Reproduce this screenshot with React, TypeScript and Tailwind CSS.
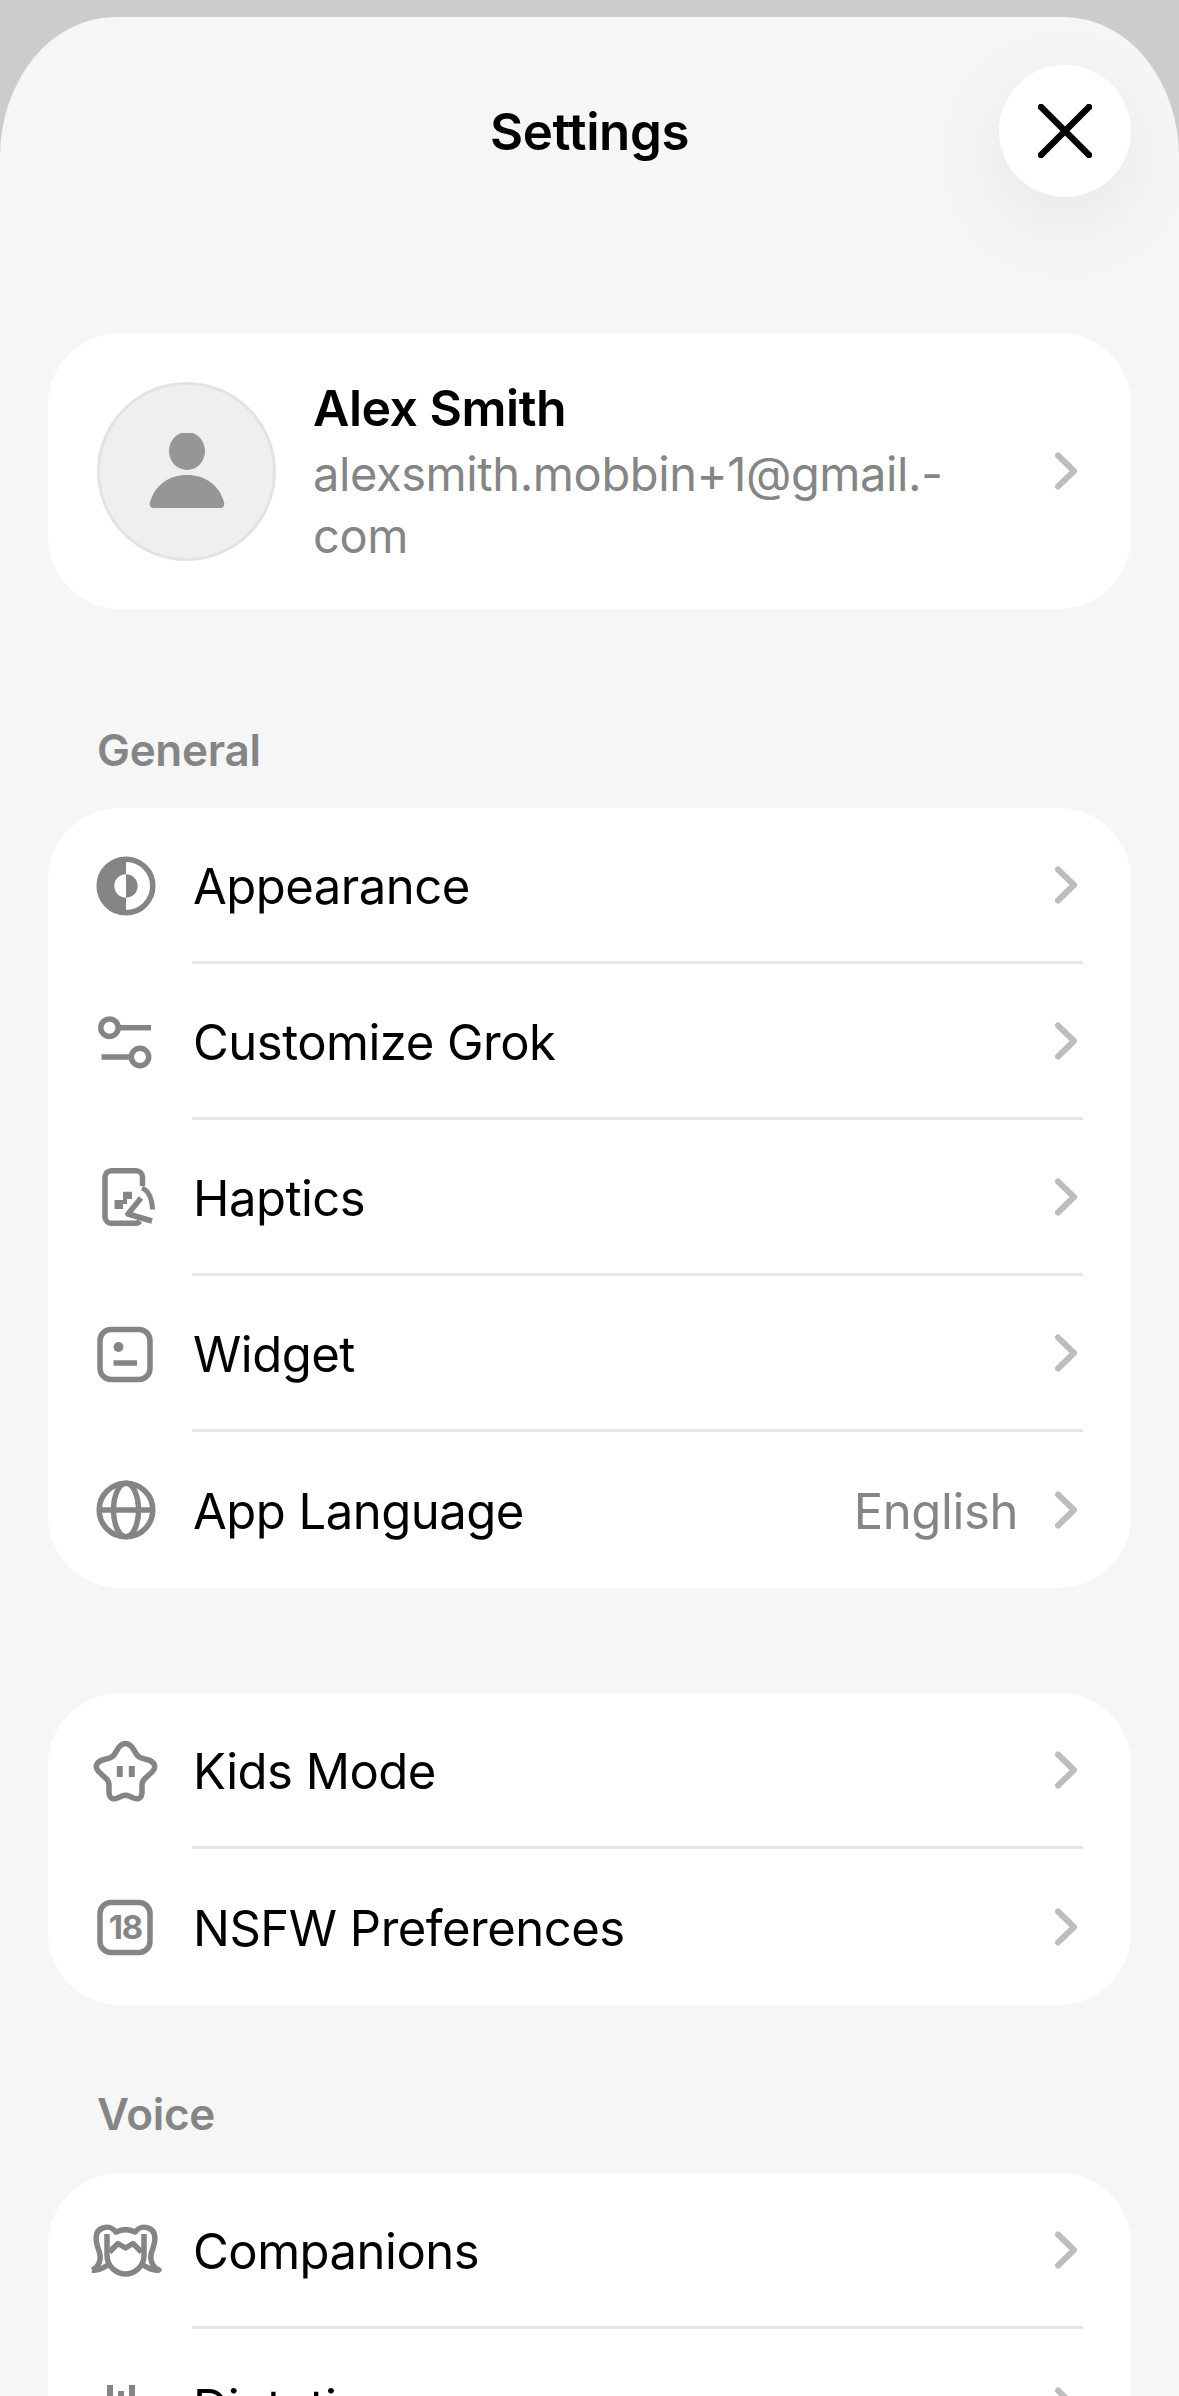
import React from "react";

const G = "#858585";

function Icon({ children }: { children: React.ReactNode }) {
  return (
    <svg viewBox="0 0 60 60" width={60} height={60} fill="none" stroke={G} strokeWidth={5.5} strokeLinecap="butt" strokeLinejoin="round" className="overflow-visible shrink-0">
      {children}
    </svg>
  );
}

const Appearance = () => (
  <Icon>
    <circle cx="30" cy="30" r="26.8" />
    <path d="M30 1 A29 29 0 0 0 30 59 Z" fill={G} stroke="none" />
    <circle cx="30" cy="30" r="11.7" fill="#fff" stroke="none" />
    <path d="M30 18.3 A11.7 11.7 0 0 1 30 41.7 Z" fill={G} stroke="none" />
  </Icon>
);
const Customize = () => (
  <Icon>
    <circle cx="13.5" cy="15.7" r="8.7" />
    <path d="M24 15.7H55" />
    <circle cx="44" cy="45" r="8.7" />
    <path d="M5.5 45H34" />
  </Icon>
);
const Haptics = () => (
  <Icon>
    <path d="M46.500 18V9A6.5 6.5 0 0 0 40 2.7H15.500A6.5 6.5 0 0 0 9 9V49A6.5 6.5 0 0 0 15.500 55.3H39.500A6 6 0 0 0 44 53" />
    <path d="M46 20C53 23 56 31 56.500 41.500" strokeWidth={5} />
    <path d="M45 30L32 46L56 53" strokeWidth={5.5} />
    <path d="M27 23.700H36V31H31V36H27V41H18.500V32H27Z" fill={G} stroke="none" />
  </Icon>
);
const Widget = () => (
  <Icon>
    <rect x="4" y="5.5" width="50" height="50" rx="11" />
    <circle cx="22.5" cy="23" r="5" fill={G} stroke="none" />
    <path d="M17.5 39H41" />
  </Icon>
);
const Globe = () => (
  <Icon>
    <circle cx="30" cy="30" r="26.8" />
    <ellipse cx="30" cy="30" rx="12.5" ry="26.8" />
    <path d="M4 30H56" />
  </Icon>
);
const Star = () => (
  <Icon>
    <path d="M23 6Q29.500 -1 36 6L41 14Q42.500 16 45 16.800L54 19.500Q62 24 56.500 30.500L48.500 38Q46 40.500 46 43.500V52Q45 60 37.500 57L33 55Q29.500 53.500 26 55L21.500 57Q14 60 13 52V43.500Q13 40.500 10.500 38L2.500 30.500Q-3 24 5 19.500L14 16.800Q16.500 16 18 14Z" />
    <path d="M23.800 25V36M35.800 25V36" strokeWidth={6} />
  </Icon>
);
const Badge18 = () => (
  <Icon>
    <rect x="4" y="5.5" width="50" height="50" rx="11" />
    <text x="29.500" y="42" textAnchor="middle" fill={G} stroke="none" fontSize="33" fontWeight="700" fontFamily="Inter, sans-serif" letterSpacing="-1">18</text>
  </Icon>
);
const Companions = () => (
  <Icon>
    <path d="M-4 49C3 46 6 38 3 30C0 22 -3 10 7 7C12 5 17 7 20 11C26 8 33 8 39 11C42 7 47 5 52 7C62 10 59 22 56 30C53 38 56 46 63 49C57 50 52 47 47 44M-4 49C2 50 7 47 12 44" />
    <path d="M11 13V34C11 47 22 53 29.500 53C37 53 48 47 48 34V13" />
    <path d="M13.500 31L22 22.500L29.500 27L37 22.500L45.500 31" />
  </Icon>
);
const Dictation = () => (
  <Icon>
    <path d="M3 24V36M14 8V52M25 14V46M36 8V52M47 24V36" strokeWidth={6} />
  </Icon>
);

const Chevron = () => (
  <svg viewBox="0 0 24 38" width={24} height={38} fill="none" stroke="#bdbdbd" strokeWidth={6} strokeLinecap="round" strokeLinejoin="round" className="shrink-0">
    <path d="M4 3.500L20 19L4 34.500" />
  </svg>
);

function Row({ icon, label, value, last }: { icon: React.ReactNode; label: string; value?: string; last?: boolean }) {
  return (
    <div className="flex h-[156px] items-stretch">
      <div className="flex w-[144px] shrink-0 items-center pl-[48px]">{icon}</div>
      <div className={`mr-[48px] flex min-w-0 flex-1 items-center ${last ? "" : "border-b-[3px] border-[#e6e6e6]"}`}>
        <span className="flex-1 pt-[4px] pl-[1px] text-[49px] tracking-[-0.5px] text-black">{label}</span>
        {value && <span className="mr-[36px] pt-[4px] text-[49px] tracking-[-0.4px] text-[#858585]">{value}</span>}
        <span className="mr-[5px]"><Chevron /></span>
      </div>
    </div>
  );
}

function Card({ children }: { children: React.ReactNode }) {
  return <div className="mx-[48px] overflow-hidden rounded-[72px] bg-white">{children}</div>;
}

export default function App() {
  return (
    <div className="h-[2396px] overflow-hidden bg-[#cccccc] pt-[17px] font-['Inter',sans-serif] antialiased">
      <div className="relative h-[2379px] overflow-hidden rounded-tl-[115px_140px] rounded-tr-[115px_140px] bg-[#f6f6f6]">
        <div className="flex h-[228px] items-start justify-center pt-[81px]">
          <h1 className="text-[51px] leading-[68px] font-semibold tracking-[-0.4px] text-black">Settings</h1>
        </div>
        <button className="absolute top-[48px] right-[48px] flex h-[132px] w-[132px] items-center justify-center rounded-full bg-white shadow-[0_24px_90px_rgba(0,0,0,0.07)]">
          <svg viewBox="0 0 54 54" width={54} height={54} fill="none" stroke="#000" strokeWidth={6.500} strokeLinecap="round">
            <path d="M3 3L51 51M51 3L3 51" />
          </svg>
        </button>

        <div className="mx-[48px] mb-[114px] mt-[88px] flex h-[276px] items-center rounded-[72px] bg-white pr-[53px] pl-[49px]">
          <div className="flex h-[179px] w-[179px] shrink-0 items-center justify-center rounded-full border-[3px] border-[#e3e3e3] bg-[#efefef]">
            <svg viewBox="0 0 76 76" width={76} height={76} fill="#969696" className="mt-[-1px]">
              <ellipse cx="38" cy="18" rx="18" ry="19" />
              <path d="M1 69C6 52 20 42 38 42C56 42 70 52 75 69C76 73 74 75 71 75H5C2 75 0 73 1 69Z" />
            </svg>
          </div>
          <div className="ml-[37px] min-w-0 flex-1 pt-[3px]">
            <div className="mb-[5px] text-[50px] leading-[60px] font-semibold tracking-[-0.5px] text-black">Alex Smith</div>
            <div className="text-[47px] leading-[62px] tracking-[-0.4px] text-[#858585]">alexsmith.mobbin+1@gmail.-<br />com</div>
          </div>
          <Chevron />
        </div>

        <div className="mb-[31px] pl-[97px] text-[44px] leading-[54px] font-semibold tracking-[-0.3px] text-[#858585]">General</div>
        <Card>
          <Row icon={<Appearance />} label="Appearance" />
          <Row icon={<Customize />} label="Customize Grok" />
          <Row icon={<Haptics />} label="Haptics" />
          <Row icon={<Widget />} label="Widget" />
          <Row icon={<Globe />} label="App Language" value="English" last />
        </Card>

        <div className="mt-[105px]">
          <Card>
            <Row icon={<Star />} label="Kids Mode" />
            <Row icon={<Badge18 />} label="NSFW Preferences" last />
          </Card>
        </div>

        <div className="mt-[82px] mb-[32px] pl-[97px] text-[44px] leading-[54px] font-semibold tracking-[-0.3px] text-[#858585]">Voice</div>
        <Card>
          <Row icon={<Companions />} label="Companions" />
          <Row icon={<Dictation />} label="Dictation" />
        </Card>
      </div>
    </div>
  );
}
